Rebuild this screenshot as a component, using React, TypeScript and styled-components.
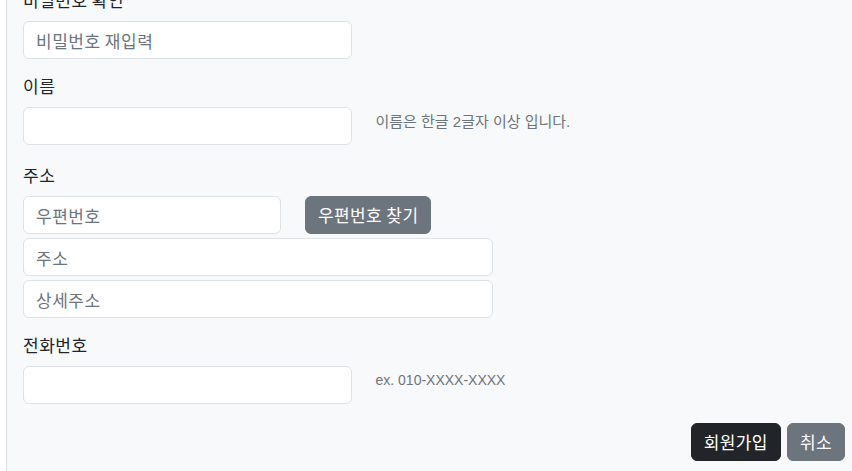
import styled, { createGlobalStyle } from 'styled-components';

const GlobalStyle = createGlobalStyle`
  html, body {
    margin: 0;
    padding: 0;
    background: #fff;
    overflow: hidden;
  }
  body {
    font-family: "Noto Sans CJK KR", "Liberation Sans", sans-serif;
    font-size: 16px;
    line-height: 1.5;
    color: #212529;
  }
  * { box-sizing: border-box; }
`;

const Main = styled.main`
  margin-left: 6px;
  border-left: 1px solid #dee2e6;
  background-color: #f8f9fa;
  min-height: 471px;
  padding: 0 7px 0 16px;
  overflow: hidden;
`;

const Form = styled.form`
  margin-top: -11px;
  display: flex;
  flex-direction: column;
`;

const Group = styled.div<{ $gap?: number }>`
  margin-bottom: ${props => props.$gap ?? 16}px;
`;

const Label = styled.label`
  display: block;
  margin-bottom: 10px;
  font-size: 17px;
  letter-spacing: 0.5px;
  line-height: 22px;
`;

const Row = styled.div`
  display: grid;
  grid-template-columns: repeat(12, 1fr);
  column-gap: 24px;
`;

const Col = styled.div<{ $span: number }>`
  grid-column: span ${props => props.$span};
`;

const Stack = styled.div`
  display: flex;
  flex-direction: column;
  gap: 4px;
`;

const Input = styled.input`
  display: block;
  width: 100%;
  height: 38px;
  padding: 6px 12px;
  font-family: inherit;
  font-size: 17px;
  letter-spacing: 0.5px;
  line-height: 24px;
  color: #212529;
  background-color: #fff;
  border: 1px solid #dee2e6;
  border-radius: 6px;
  outline: none;
  &::placeholder {
    color: #6c757d;
    opacity: 1;
  }
`;

const HelpText = styled.div<{ $latin?: boolean }>`
  margin-top: 4px;
  font-family: "Liberation Sans", "Noto Sans CJK KR", sans-serif;
  font-size: ${props => (props.$latin ? 14 : 15)}px;
  line-height: 21px;
  color: #6c757d;
`;

const Button = styled.button<{ $variant: 'dark' | 'secondary' }>`
  height: 38px;
  padding: 6px 12px;
  font-family: inherit;
  font-size: 17px;
  letter-spacing: 0.4px;
  line-height: 24px;
  color: #fff;
  border: 1px solid ${props => (props.$variant === 'dark' ? '#212529' : '#6c757d')};
  background-color: ${props => (props.$variant === 'dark' ? '#212529' : '#6c757d')};
  border-radius: 6px;
  cursor: pointer;
  white-space: nowrap;
`;

const Actions = styled.div`
  display: flex;
  justify-content: flex-end;
  gap: 6px;
  margin-top: 3px;
`;

function App() {
  return (
    <>
      <GlobalStyle />
      <Main>
        <Form onSubmit={e => e.preventDefault()}>
          <Group>
            <Label>비밀번호 확인</Label>
            <Row>
              <Col $span={5}>
                <Input type="password" placeholder="비밀번호 재입력" />
              </Col>
            </Row>
          </Group>

          <Group $gap={19}>
            <Label>이름</Label>
            <Row>
              <Col $span={5}>
                <Input type="text" />
              </Col>
              <Col $span={7}>
                <HelpText>이름은 한글 2글자 이상 입니다.</HelpText>
              </Col>
            </Row>
          </Group>

          <Group>
            <Label>주소</Label>
            <Stack>
              <Row>
                <Col $span={4}>
                  <Input type="text" placeholder="우편번호" />
                </Col>
                <Col $span={8}>
                  <Button type="button" $variant="secondary">우편번호 찾기</Button>
                </Col>
              </Row>
              <Row>
                <Col $span={7}>
                  <Input type="text" placeholder="주소" />
                </Col>
              </Row>
              <Row>
                <Col $span={7}>
                  <Input type="text" placeholder="상세주소" />
                </Col>
              </Row>
            </Stack>
          </Group>

          <Group>
            <Label>전화번호</Label>
            <Row>
              <Col $span={5}>
                <Input type="text" />
              </Col>
              <Col $span={7}>
                <HelpText $latin>ex. 010-XXXX-XXXX</HelpText>
              </Col>
            </Row>
          </Group>

          <Actions>
            <Button type="submit" $variant="dark">회원가입</Button>
            <Button type="button" $variant="secondary">취소</Button>
          </Actions>
        </Form>
      </Main>
    </>
  );
}

export default App;
